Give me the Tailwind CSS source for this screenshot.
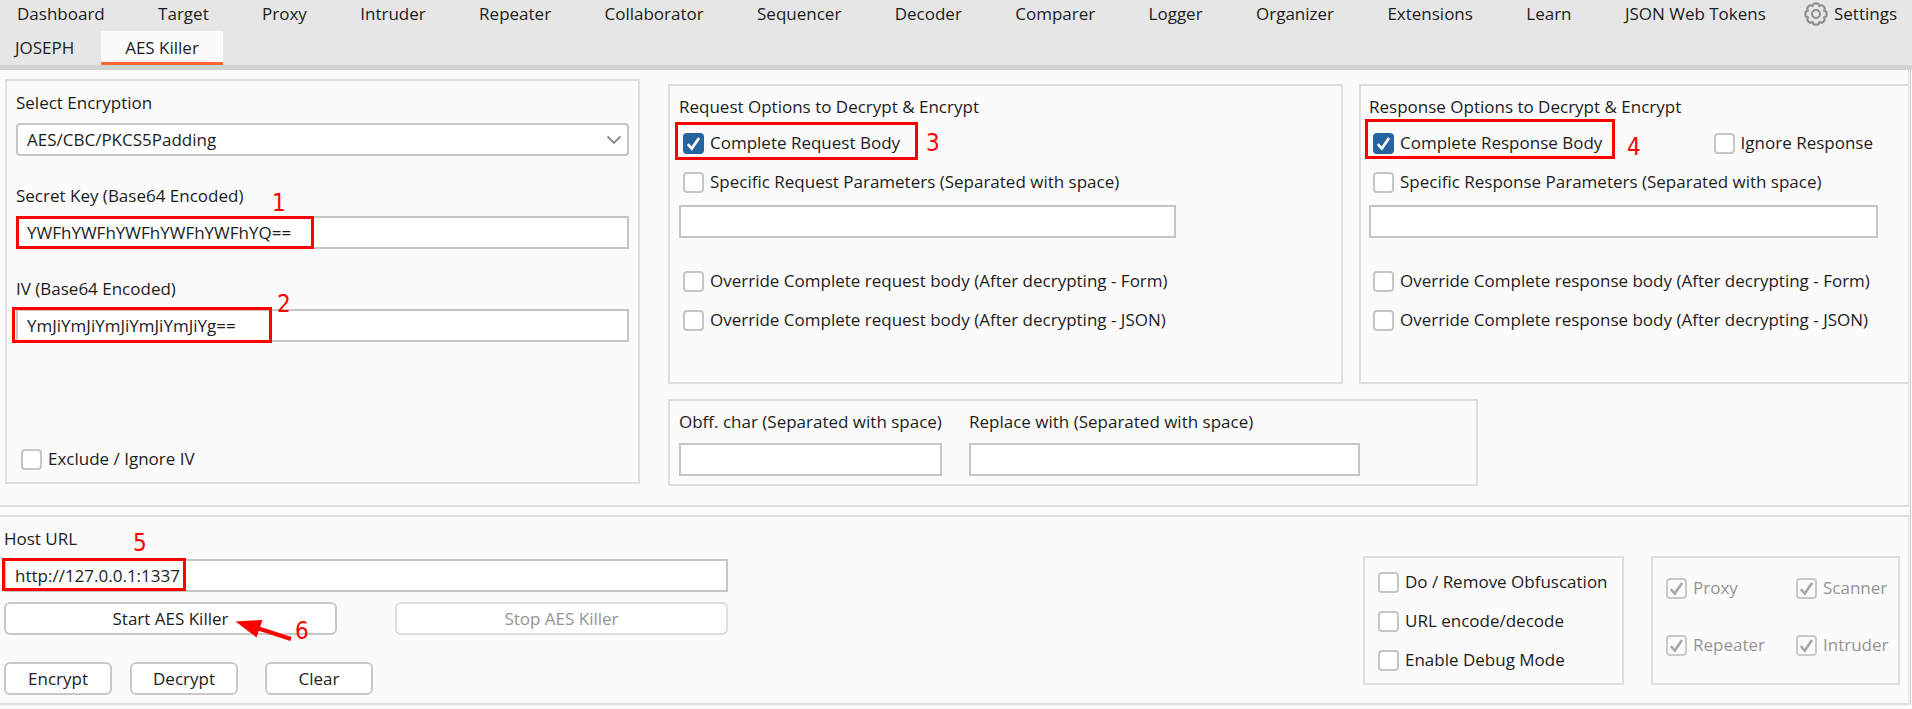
<!DOCTYPE html>
<html lang="en">
<head>
<meta charset="utf-8">
<title>AES Killer</title>
<script src="https://cdn.jsdelivr.net/npm/@tailwindcss/browser@4"></script>
</head>
<body class="min-h-screen bg-[#fbfbfb] font-['Open_Sans','Noto_Sans',sans-serif] text-[17px] leading-6 text-[#1c1c1c]">

<svg class="hidden" aria-hidden="true">
  <symbol id="tick" viewBox="0 0 21 21"><path d="M4.8 11.2 8.8 15.6 16 5" fill="none" stroke="currentColor" stroke-width="2.6"/></symbol>
</svg>

<header class="h-[70px] border-b-[5px] border-[#cfd3d2] bg-[#e6e6e6]">
  <div class="flex h-[31px] items-start pt-[2px] pr-[15px] pl-[17px]">
    <nav class="flex flex-1 justify-between">
      <a href="#">Dashboard</a><a href="#">Target</a><a href="#">Proxy</a><a href="#">Intruder</a><a href="#">Repeater</a><a href="#">Collaborator</a><a href="#">Sequencer</a><a href="#">Decoder</a><a href="#">Comparer</a><a href="#">Logger</a><a href="#">Organizer</a><a href="#">Extensions</a><a href="#">Learn</a><a href="#">JSON Web Tokens</a>
    </nav>
    <button class="ml-[38px] flex items-center gap-[6px]">
      <svg class="size-6 text-[#8c8c8c]" viewBox="0 0 24 24" fill="none" stroke="currentColor" stroke-width="2" stroke-linejoin="round"><path d="M12 1.2 14.4 1.7 15.3 4 17.6 3.1 19.8 4.4 20.9 6.4 20 8.7 22.3 9.6 22.8 12 22.3 14.4 20 15.3 20.9 17.6 19.6 19.6 17.6 20.9 15.3 20 14.4 22.3 12 22.8 9.6 22.3 8.7 20 6.4 20.9 4.4 19.6 3.1 17.6 4 15.3 1.7 14.4 1.2 12 1.7 9.6 4 8.7 3.1 6.4 4.4 4.4 6.4 3.1 8.7 4 9.6 1.7Z"/><circle cx="12" cy="12" r="4"/></svg>
      Settings
    </button>
  </div>
  <nav class="flex h-[34px] items-stretch pl-[15px]">
    <a href="#" class="flex w-[86px] items-center">JOSEPH</a>
    <a href="#" class="flex w-[122px] items-center justify-center border-b-[3px] border-[#ff6633] bg-[#fbfbfb] pt-[3px]">AES Killer</a>
  </nav>
</header>

<main class="mr-px border-r border-[#c8c8c8] pr-px">
  <section class="flex h-[437px] gap-[28px] border-r border-b-2 border-[#dedede] pl-[5px]">

    <div class="mt-[9px] flex h-[405px] w-[635px] flex-col border-2 border-[#dedede] px-[9px] pt-[10px]">
      <label for="enc">Select Encryption</label>
      <div class="relative mt-[8px]">
        <select id="enc" class="h-[33px] w-full appearance-none rounded border-2 border-[#c8c4c5] bg-white px-[9px]"><option>AES/CBC/PKCS5Padding</option></select>
        <svg class="pointer-events-none absolute top-[12px] right-[7px] h-[10px] w-[16px] text-[#888]" viewBox="0 0 16 10" fill="none" stroke="currentColor" stroke-width="1.8"><path d="M1.5 1.5 8 8 14.5 1.5"/></svg>
      </div>
      <label for="key" class="mt-[28px]">Secret Key (Base64 Encoded)</label>
      <div class="relative mt-[8px]">
        <input id="key" value="YWFhYWFhYWFhYWFhYWFhYQ==" class="h-[33px] w-full border-2 border-[#c8c4c5] bg-white px-[9px]">
        <span class="pointer-events-none absolute top-0 left-0 h-[33px] w-[298px] border-3 border-[#fe0000]"></span>
        <span class="absolute -top-[27px] left-[256px] font-['DejaVu_Sans_Condensed','DejaVu_Sans',sans-serif] text-[24px] leading-7 text-[#fe0000]">1</span>
      </div>
      <label for="iv" class="mt-[28px]">IV (Base64 Encoded)</label>
      <div class="relative mt-[8px]">
        <input id="iv" value="YmJiYmJiYmJiYmJiYmJiYg==" class="h-[33px] w-full border-2 border-[#c8c4c5] bg-white px-[9px]">
        <span class="pointer-events-none absolute -top-[2px] -left-[4px] h-[36px] w-[260px] border-3 border-[#fe0000]"></span>
        <span class="absolute -top-[19px] left-[261px] font-['DejaVu_Sans_Condensed','DejaVu_Sans',sans-serif] text-[24px] leading-7 text-[#fe0000]">2</span>
      </div>
      <label class="mt-auto mb-[11px] flex items-center gap-[6px] pl-[5px]"><input type="checkbox" class="size-[21px] appearance-none rounded border-2 border-[#c6c6c6] bg-white">Exclude / Ignore IV</label>
    </div>

    <div class="flex flex-1 flex-col pt-[14px]">
      <div class="flex h-[300px] gap-[16px]">

        <div class="flex w-[675px] flex-col items-start border-2 border-[#dedede] px-[9px] pt-[9px]">
          <h2>Request Options to Decrypt &amp; Encrypt</h2>
          <div class="relative mt-[12px] pl-[4px]">
            <label class="flex h-[24px] items-center gap-[6px]"><span class="relative flex"><input type="checkbox" checked class="size-[21px] appearance-none rounded bg-[#26649f]"><svg class="pointer-events-none absolute inset-0 size-[21px] text-white"><use href="#tick"/></svg></span>Complete Request Body</label>
            <span class="pointer-events-none absolute -top-[9px] -left-[4px] h-[38px] w-[243px] border-3 border-[#fe0000]"></span>
            <span class="absolute -top-[2px] left-[247px] font-['DejaVu_Sans_Condensed','DejaVu_Sans',sans-serif] text-[24px] leading-7 text-[#fe0000]">3</span>
          </div>
          <label class="mt-[15px] flex h-[24px] items-center gap-[6px] pl-[4px]"><input id="req-params" type="checkbox" class="size-[21px] appearance-none rounded border-2 border-[#c6c6c6] bg-white">Specific Request Parameters (Separated with space)</label>
          <input aria-label="Specific Request Parameters" class="mt-[11px] h-[33px] w-[497px] border-2 border-[#c8c4c5] bg-white px-[9px]">
          <label class="mt-[31px] flex h-[24px] items-center gap-[6px] pl-[4px]"><input type="checkbox" class="size-[21px] appearance-none rounded border-2 border-[#c6c6c6] bg-white">Override Complete request body (After decrypting - Form)</label>
          <label class="mt-[15px] flex h-[24px] items-center gap-[6px] pl-[4px]"><input type="checkbox" class="size-[21px] appearance-none rounded border-2 border-[#c6c6c6] bg-white">Override Complete request body (After decrypting - JSON)</label>
        </div>

        <div class="-mr-px flex flex-1 flex-col items-start border-2 border-r-0 border-[#dedede] px-[8px] pt-[9px]">
          <h2>Response Options to Decrypt &amp; Encrypt</h2>
          <div class="mt-[12px] flex w-full justify-between pr-[28px] pl-[4px]">
            <div class="relative">
              <label class="flex h-[24px] items-center gap-[6px]"><span class="relative flex"><input type="checkbox" checked class="size-[21px] appearance-none rounded bg-[#26649f]"><svg class="pointer-events-none absolute inset-0 size-[21px] text-white"><use href="#tick"/></svg></span>Complete Response Body</label>
              <span class="pointer-events-none absolute -top-[12px] -left-[8px] h-[40px] w-[250px] border-3 border-[#fe0000]"></span>
              <span class="absolute top-[2px] left-[254px] font-['DejaVu_Sans_Condensed','DejaVu_Sans',sans-serif] text-[24px] leading-7 text-[#fe0000]">4</span>
            </div>
            <label class="flex h-[24px] items-center gap-[6px]"><input type="checkbox" class="size-[21px] appearance-none rounded border-2 border-[#c6c6c6] bg-white">Ignore Response</label>
          </div>
          <label class="mt-[15px] flex h-[24px] items-center gap-[6px] pl-[4px]"><input id="res-params" type="checkbox" class="size-[21px] appearance-none rounded border-2 border-[#c6c6c6] bg-white">Specific Response Parameters (Separated with space)</label>
          <div class="mt-[11px] w-full pr-[23px]"><input aria-label="Specific Response Parameters" class="block h-[33px] w-full border-2 border-[#c8c4c5] bg-white px-[9px]"></div>
          <label class="mt-[31px] flex h-[24px] items-center gap-[6px] pl-[4px]"><input type="checkbox" class="size-[21px] appearance-none rounded border-2 border-[#c6c6c6] bg-white">Override Complete response body (After decrypting - Form)</label>
          <label class="mt-[15px] flex h-[24px] items-center gap-[6px] pl-[4px]"><input type="checkbox" class="size-[21px] appearance-none rounded border-2 border-[#c6c6c6] bg-white">Override Complete response body (After decrypting - JSON)</label>
        </div>
      </div>

      <div class="mt-[15px] flex h-[87px] w-[810px] gap-[27px] border-2 border-[#dedede] px-[9px] pt-[9px]">
        <label class="flex w-[263px] flex-col gap-[9px] whitespace-nowrap">Obff. char (Separated with space)<input class="h-[33px] w-full border-2 border-[#c8c4c5] bg-white px-[9px]"></label>
        <label class="flex w-[391px] flex-col gap-[9px] whitespace-nowrap">Replace with (Separated with space)<input class="h-[33px] w-full border-2 border-[#c8c4c5] bg-white px-[9px]"></label>
      </div>
    </div>
  </section>

  <section class="mt-[8px] flex h-[190px] justify-between border-y-2 border-r border-[#dedede] pr-[8px] pl-[4px]">
    <div class="w-[724px] pt-[10px]">
      <label for="host" class="relative block">Host URL<span class="absolute top-[2px] left-[129px] font-['DejaVu_Sans_Condensed','DejaVu_Sans',sans-serif] text-[24px] leading-7 text-[#fe0000]">5</span></label>
      <div class="relative mt-[8px]">
        <input id="host" value="http://127.0.0.1:1337" class="block h-[33px] w-full border-2 border-[#c8c4c5] bg-white px-[9px]">
        <span class="pointer-events-none absolute -top-px -left-[2px] h-[33px] w-[184px] border-3 border-[#fe0000]"></span>
      </div>
      <div class="relative mt-[10px] flex justify-between">
        <button class="h-[33px] w-[333px] rounded-[6px] border-2 border-[#cbc7c8] bg-white">Start AES Killer</button>
        <button disabled class="h-[33px] w-[333px] rounded-[6px] border-2 border-[#dedede] bg-white text-[#949494]">Stop AES Killer</button>
        <svg class="pointer-events-none absolute top-[14px] left-[231px] h-[26px] w-[58px] text-[#fe0000]" viewBox="0 0 58 26"><path d="M0.5 5.5 27.5 4 21.5 21.5Z" fill="currentColor"/><path d="M22 12 56 23" stroke="currentColor" stroke-width="4"/></svg>
        <span class="absolute top-[15px] left-[291px] font-['DejaVu_Sans_Condensed','DejaVu_Sans',sans-serif] text-[24px] leading-7 text-[#fe0000]">6</span>
      </div>
      <div class="mt-[27px] flex">
        <button class="h-[33px] w-[108px] rounded-[6px] border-2 border-[#cbc7c8] bg-white">Encrypt</button>
        <button class="ml-[18px] h-[33px] w-[108px] rounded-[6px] border-2 border-[#cbc7c8] bg-white">Decrypt</button>
        <button class="ml-[27px] h-[33px] w-[108px] rounded-[6px] border-2 border-[#cbc7c8] bg-white">Clear</button>
      </div>
    </div>

    <div class="flex gap-[27px] pt-[39px]">
      <div class="flex h-[129px] w-[261px] flex-col gap-[15px] border-2 border-[#dedede] pt-[12px] pl-[13px] whitespace-nowrap">
        <label class="flex h-[24px] items-center gap-[6px]"><input type="checkbox" class="size-[21px] appearance-none rounded border-2 border-[#c6c6c6] bg-white">Do / Remove Obfuscation</label>
        <label class="flex h-[24px] items-center gap-[6px]"><input type="checkbox" class="size-[21px] appearance-none rounded border-2 border-[#c6c6c6] bg-white">URL encode/decode</label>
        <label class="flex h-[24px] items-center gap-[6px]"><input type="checkbox" class="size-[21px] appearance-none rounded border-2 border-[#c6c6c6] bg-white">Enable Debug Mode</label>
      </div>
      <div class="grid h-[129px] w-[249px] grid-cols-[130px_auto] content-start gap-y-[33px] border-2 border-[#dedede] pt-[18px] pl-[13px] text-[#949494]">
        <label class="flex h-[24px] items-center gap-[6px]"><span class="relative flex"><input type="checkbox" checked disabled class="size-[21px] appearance-none rounded border-2 border-[#c9c9c9] bg-[#fbfbfb]"><svg class="pointer-events-none absolute inset-0 size-[21px] text-[#a8a8a8]"><use href="#tick"/></svg></span>Proxy</label>
        <label class="flex h-[24px] items-center gap-[6px]"><span class="relative flex"><input type="checkbox" checked disabled class="size-[21px] appearance-none rounded border-2 border-[#c9c9c9] bg-[#fbfbfb]"><svg class="pointer-events-none absolute inset-0 size-[21px] text-[#a8a8a8]"><use href="#tick"/></svg></span>Scanner</label>
        <label class="flex h-[24px] items-center gap-[6px]"><span class="relative flex"><input type="checkbox" checked disabled class="size-[21px] appearance-none rounded border-2 border-[#c9c9c9] bg-[#fbfbfb]"><svg class="pointer-events-none absolute inset-0 size-[21px] text-[#a8a8a8]"><use href="#tick"/></svg></span>Repeater</label>
        <label class="flex h-[24px] items-center gap-[6px]"><span class="relative flex"><input type="checkbox" checked disabled class="size-[21px] appearance-none rounded border-2 border-[#c9c9c9] bg-[#fbfbfb]"><svg class="pointer-events-none absolute inset-0 size-[21px] text-[#a8a8a8]"><use href="#tick"/></svg></span>Intruder</label>
      </div>
    </div>
  </section>
</main>
</body>
</html>
